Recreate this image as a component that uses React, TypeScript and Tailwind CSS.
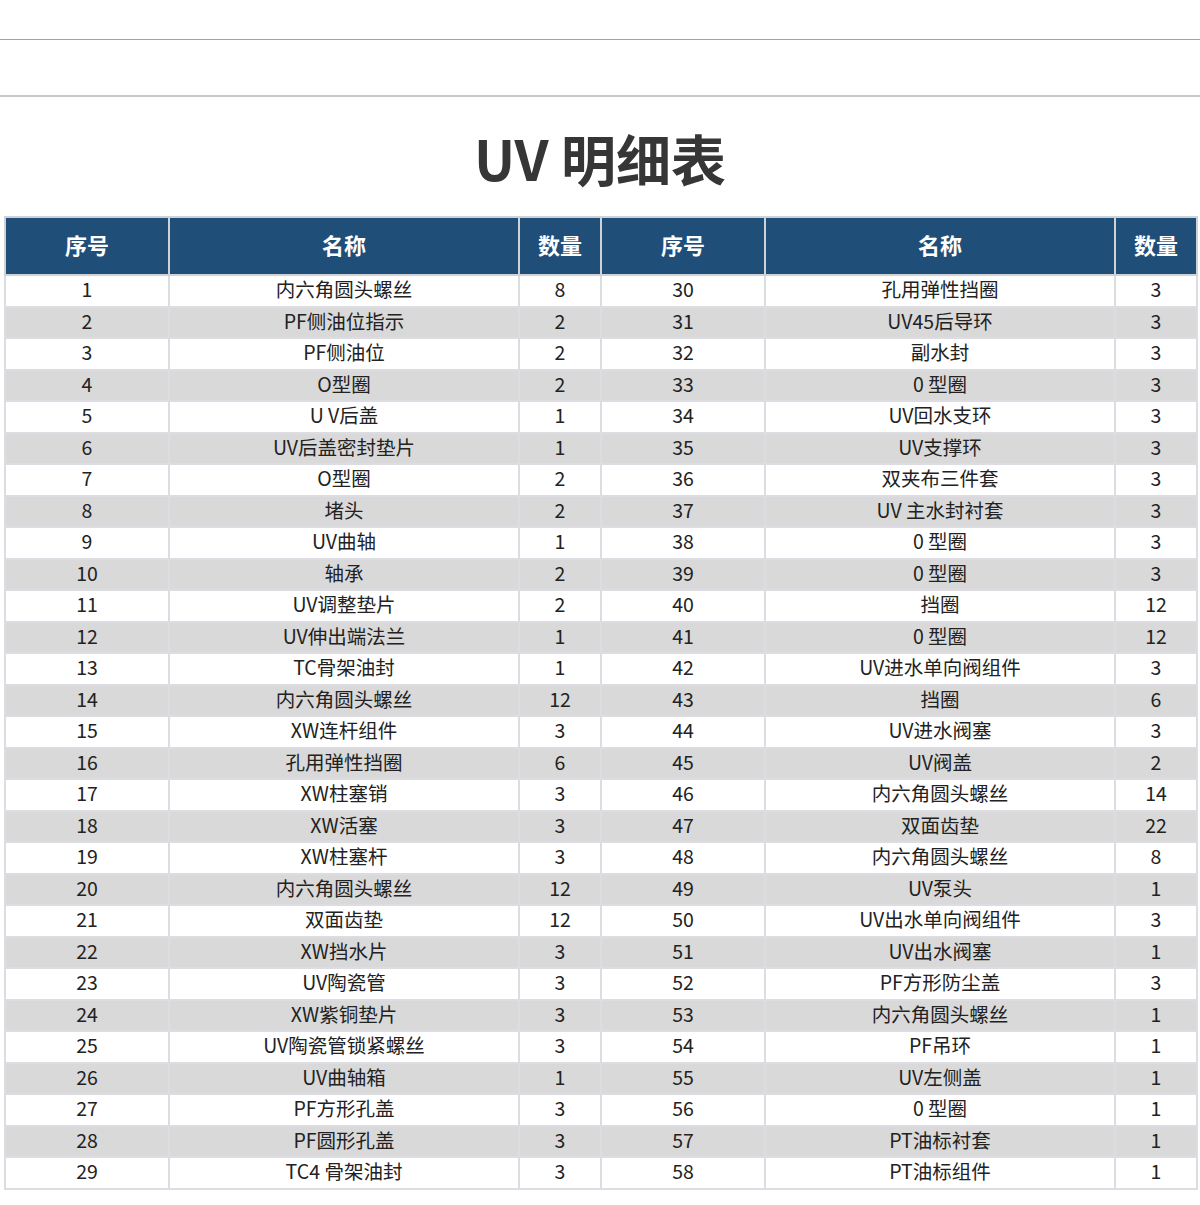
const left: [string, string, string][] = [
  ["1", "内六角圆头螺丝", "8"],
  ["2", "PF侧油位指示", "2"],
  ["3", "PF侧油位", "2"],
  ["4", "O型圈", "2"],
  ["5", "U V后盖", "1"],
  ["6", "UV后盖密封垫片", "1"],
  ["7", "O型圈", "2"],
  ["8", "堵头", "2"],
  ["9", "UV曲轴", "1"],
  ["10", "轴承", "2"],
  ["11", "UV调整垫片", "2"],
  ["12", "UV伸出端法兰", "1"],
  ["13", "TC骨架油封", "1"],
  ["14", "内六角圆头螺丝", "12"],
  ["15", "XW连杆组件", "3"],
  ["16", "孔用弹性挡圈", "6"],
  ["17", "XW柱塞销", "3"],
  ["18", "XW活塞", "3"],
  ["19", "XW柱塞杆", "3"],
  ["20", "内六角圆头螺丝", "12"],
  ["21", "双面齿垫", "12"],
  ["22", "XW挡水片", "3"],
  ["23", "UV陶瓷管", "3"],
  ["24", "XW紫铜垫片", "3"],
  ["25", "UV陶瓷管锁紧螺丝", "3"],
  ["26", "UV曲轴箱", "1"],
  ["27", "PF方形孔盖", "3"],
  ["28", "PF圆形孔盖", "3"],
  ["29", "TC4 骨架油封", "3"],
];

const right: [string, string, string][] = [
  ["30", "孔用弹性挡圈", "3"],
  ["31", "UV45后导环", "3"],
  ["32", "副水封", "3"],
  ["33", "0 型圈", "3"],
  ["34", "UV回水支环", "3"],
  ["35", "UV支撑环", "3"],
  ["36", "双夹布三件套", "3"],
  ["37", "UV 主水封衬套", "3"],
  ["38", "0 型圈", "3"],
  ["39", "0 型圈", "3"],
  ["40", "挡圈", "12"],
  ["41", "0 型圈", "12"],
  ["42", "UV进水单向阀组件", "3"],
  ["43", "挡圈", "6"],
  ["44", "UV进水阀塞", "3"],
  ["45", "UV阀盖", "2"],
  ["46", "内六角圆头螺丝", "14"],
  ["47", "双面齿垫", "22"],
  ["48", "内六角圆头螺丝", "8"],
  ["49", "UV泵头", "1"],
  ["50", "UV出水单向阀组件", "3"],
  ["51", "UV出水阀塞", "1"],
  ["52", "PF方形防尘盖", "3"],
  ["53", "内六角圆头螺丝", "1"],
  ["54", "PF吊环", "1"],
  ["55", "UV左侧盖", "1"],
  ["56", "0 型圈", "1"],
  ["57", "PT油标衬套", "1"],
  ["58", "PT油标组件", "1"],
];

const heads = ["序号", "名称", "数量", "序号", "名称", "数量"];

export default function App() {
  return (
    <div className="w-[1200px] h-[1205px] bg-white font-['Noto_Sans_CJK_SC','Noto_Sans',sans-serif] overflow-hidden">
      <div className="h-[39px]" />
      <div className="h-px bg-[#a3a3a3]" />
      <div className="h-[55px]" />
      <div className="h-[2px] bg-[#c9c9c9]" />
      <h1 className="h-[119px] flex items-center justify-center pt-[2px] text-[55px] font-bold text-[#363636] leading-none">
        UV 明细表
      </h1>
      <div className="px-[4px]">
        <table className="w-[1192px] border-collapse table-fixed">
          <colgroup>
            <col className="w-[164px]" />
            <col className="w-[350px]" />
            <col className="w-[82px]" />
            <col className="w-[164px]" />
            <col className="w-[350px]" />
            <col className="w-[82px]" />
          </colgroup>
          <thead>
            <tr className="h-[58px] bg-[#1f4e79]">
              {heads.map((h, i) => (
                <th
                  key={i}
                  className="border-2 border-[#cfd3d8] text-white text-[22px] font-bold text-center leading-none pb-[5px]"
                >
                  {h}
                </th>
              ))}
            </tr>
          </thead>
          <tbody>
            {left.map((l, i) => {
              const r = right[i];
              return (
                <tr
                  key={i}
                  className={`h-[31.5px] ${i % 2 === 1 ? "bg-[#d9d9d9]" : "bg-white"}`}
                >
                  {[...l, ...r].map((c, j) => (
                    <td
                      key={j}
                      className="border-2 border-[#dcdce2] text-center text-[19.5px] text-[#222222] leading-none p-0 pb-[4px] whitespace-nowrap"
                    >
                      {c}
                    </td>
                  ))}
                </tr>
              );
            })}
          </tbody>
        </table>
      </div>
    </div>
  );
}
